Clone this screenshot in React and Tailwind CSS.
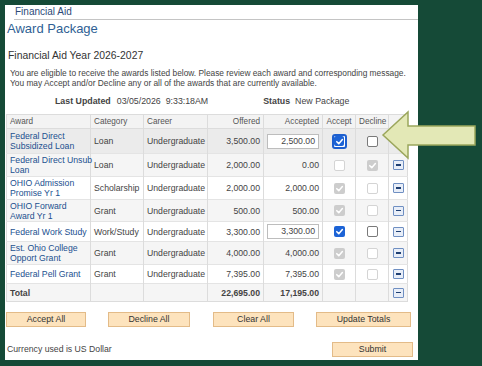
import React from "react";

const rows = [
    { name: ["Federal Direct", "Subsidized Loan"], cat: "Loan", offered: "3,500.00", accepted: "2,500.00", input: true, accept: "focus", decline: "open", h: "h-[25px]", bg: "bg-[#ebebeb]", minus: false },
    { name: ["Federal Direct Unsub", "Loan"], cat: "Loan", offered: "2,000.00", accepted: "0.00", accept: "off", decline: "dis", h: "h-[23px]", bg: "bg-[#f5f5f5]", minus: true },
    { name: ["OHIO Admission", "Promise Yr 1"], cat: "Scholarship", offered: "2,000.00", accepted: "2,000.00", accept: "dis", decline: "off", h: "h-[23px]", bg: "bg-white", minus: true },
    { name: ["OHIO Forward", "Award Yr 1"], cat: "Grant", offered: "500.00", accepted: "500.00", accept: "dis", decline: "off", h: "h-[22px]", bg: "bg-[#f5f5f5]", minus: true },
    { name: ["Federal Work Study"], cat: "Work/Study", offered: "3,300.00", accepted: "3,300.00", input: true, accept: "on", decline: "open", h: "h-[20px]", bg: "bg-white", minus: true },
    { name: ["Est. Ohio College", "Opport Grant"], cat: "Grant", offered: "4,000.00", accepted: "4,000.00", accept: "dis", decline: "off", h: "h-[23px]", bg: "bg-[#f5f5f5]", minus: true },
    { name: ["Federal Pell Grant"], cat: "Grant", offered: "7,395.00", accepted: "7,395.00", accept: "dis", decline: "off", h: "h-[19px]", bg: "bg-white", minus: true },
];

const Check = ({ color = "white" }) => (
    <svg width="9" height="9" viewBox="0 0 10 10">
        <path d="M2 5.2 L4.2 7.4 L8.2 2.8" fill="none" stroke={color} strokeWidth="1.7" strokeLinecap="round" strokeLinejoin="round" />
    </svg>
);

const Box = ({ state }) => {
    if (state === "focus")
        return (
            <span className="inline-flex items-center justify-center w-[15px] h-[15px] rounded-[3px] border-2 border-[#1d5fcf] bg-white">
                <span className="inline-flex items-center justify-center w-[10px] h-[10px] rounded-[2px] bg-[#1c63d6]"><Check /></span>
            </span>
        );
    if (state === "on")
        return <span className="inline-flex items-center justify-center w-[11px] h-[11px] rounded-[2px] bg-[#1c63d6]"><Check /></span>;
    if (state === "dis")
        return <span className="inline-flex items-center justify-center w-[11px] h-[11px] rounded-[2px] bg-[#cdcdcd]"><Check /></span>;
    if (state === "open")
        return <span className="inline-block w-[11px] h-[11px] rounded-[2px] border border-[#7a7a7a] bg-white" />;
    return <span className="inline-block w-[11px] h-[11px] rounded-[2px] border border-[#d4d4d4] bg-white" />;
};

const Minus = () => (
    <span className="inline-flex items-center justify-center w-[11px] h-[10px] border border-[#6f8fc2] bg-[#e8eef8] rounded-[1px]">
        <span className="block w-[5px] h-[1.5px] bg-[#1e3f73]" />
    </span>
);

const Btn = ({ children, className }) => (
    <button className={`h-[15px] bg-[#fde3bd] border border-[#e3bb88] text-[#333] text-[8.8px] leading-none ${className}`}>
        {children}
    </button>
);

const cell = "border-r border-[#dcdcdc] px-[3px] align-middle";

export default function App() {
    return (
        <div className="relative w-[482px] h-[366px] bg-[#154a37] pt-[5px] pl-[5px] overflow-hidden" style={{ fontFamily: '"Liberation Sans", Arial, sans-serif' }}>
            <div className="w-[413px] h-[355px] bg-white flex flex-col text-[#444]">
                <div className="ml-[9px] h-[15px] border-b border-[#c4c4c4] pl-[1px] text-[10px] leading-[14px] text-[#2c4a78]">Financial Aid</div>
                <div className="pl-[2px] h-[19px] text-[13px] leading-[18px] text-[#2f5f94]">Award Package</div>
                <div className="pl-[3px] mt-[10px] h-[14px] text-[10.4px] leading-[14px] text-[#333]">Financial Aid Year 2026-2027</div>
                <div className="pl-[5px] mt-[5px] text-[8.35px] leading-[10px] text-[#444] whitespace-nowrap">
                    You are eligible to receive the awards listed below. Please review each award and corresponding message.
                    <br />
                    You may Accept and/or Decline any or all of the awards that are currently available.
                </div>
                <div className="mt-[8px] h-[12px] flex items-center text-[8.8px] text-[#444] whitespace-nowrap">
                    <span className="ml-[50px] font-bold">Last Updated</span>
                    <span className="ml-[6px]">03/05/2026&nbsp;&nbsp;9:33:18AM</span>
                    <span className="ml-[55px] font-bold">Status</span>
                    <span className="ml-[5px]">New Package</span>
                </div>
                <table className="ml-[1px] mt-[6px] w-[401px] border-collapse border border-[#dcdcdc] text-[8.7px] leading-[10px] text-[#444] table-fixed">
                    <colgroup>
                        <col className="w-[84px]" />
                        <col className="w-[53px]" />
                        <col className="w-[64px]" />
                        <col className="w-[56px]" />
                        <col className="w-[59px]" />
                        <col className="w-[33px]" />
                        <col className="w-[33px]" />
                        <col className="w-[19px]" />
                    </colgroup>
                    <thead>
                        <tr className="h-[14px] bg-[#f3f3f3] border-b border-[#dcdcdc] text-[8.2px] text-[#555]">
                            <th className={`${cell} text-left font-normal`}>Award</th>
                            <th className={`${cell} text-left font-normal`}>Category</th>
                            <th className={`${cell} text-left font-normal`}>Career</th>
                            <th className={`${cell} text-right font-normal`}>Offered</th>
                            <th className={`${cell} text-right font-normal`}>Accepted</th>
                            <th className={`${cell} text-center font-normal`}>Accept</th>
                            <th className={`${cell} text-center font-normal`}>Decline</th>
                            <th className="font-normal" />
                        </tr>
                    </thead>
                    <tbody>
                        {rows.map((r, i) => (
                            <tr key={i} className={`${r.h} ${r.bg} border-b border-[#e4e4e4]`}>
                                <td className={`${cell} text-[#22508f]`}>
                                    {r.name.map((n, j) => (
                                        <div key={j} className="whitespace-nowrap">{n}</div>
                                    ))}
                                </td>
                                <td className={cell}>{r.cat}</td>
                                <td className={cell}>Undergraduate</td>
                                <td className={`${cell} text-right`}>{r.offered}</td>
                                <td className={`${cell} text-right`}>
                                    {r.input ? (
                                        <div className="ml-auto w-[52px] h-[15px] border border-[#bdbdbd] bg-white pr-[3px] leading-[13px] text-right">{r.accepted}</div>
                                    ) : (
                                        r.accepted
                                    )}
                                </td>
                                <td className={`${cell} text-center`}>
                                    <div className="flex justify-center"><Box state={r.accept} /></div>
                                </td>
                                <td className={`${cell} text-center`}>
                                    <div className="flex justify-center"><Box state={r.decline} /></div>
                                </td>
                                <td className="text-center">
                                    <div className="flex justify-center">{r.minus && <Minus />}</div>
                                </td>
                            </tr>
                        ))}
                        <tr className="h-[18px] bg-[#f5f5f5] font-bold">
                            <td className={cell}>Total</td>
                            <td className={cell} />
                            <td className={cell} />
                            <td className={`${cell} text-right`}>22,695.00</td>
                            <td className={`${cell} text-right`}>17,195.00</td>
                            <td className={cell} />
                            <td className={cell} />
                            <td className="text-center">
                                <div className="flex justify-center"><Minus /></div>
                            </td>
                        </tr>
                    </tbody>
                </table>
                <div className="mt-[10px] ml-[1px] flex">
                    <Btn className="w-[80px]">Accept All</Btn>
                    <Btn className="w-[82px] ml-[22px]">Decline All</Btn>
                    <Btn className="w-[81px] ml-[23px]">Clear All</Btn>
                    <Btn className="w-[95px] ml-[22px]">Update Totals</Btn>
                </div>
                <div className="mt-[15px] flex items-center">
                    <span className="ml-[2px] text-[8.7px] text-[#444]">Currency used is US Dollar</span>
                    <Btn className="w-[81px] ml-auto mr-[5px]">Submit</Btn>
                </div>
            </div>
            <svg className="absolute left-[381px] top-[110px]" width="98" height="52" viewBox="0 0 98 52">
                <polygon points="2,25 27,2 27,16 94,16 94,35 27,35 27,48" fill="#e3e8b6" stroke="#9ba65c" strokeWidth="1.5" strokeLinejoin="miter" />
            </svg>
        </div>
    );
}
